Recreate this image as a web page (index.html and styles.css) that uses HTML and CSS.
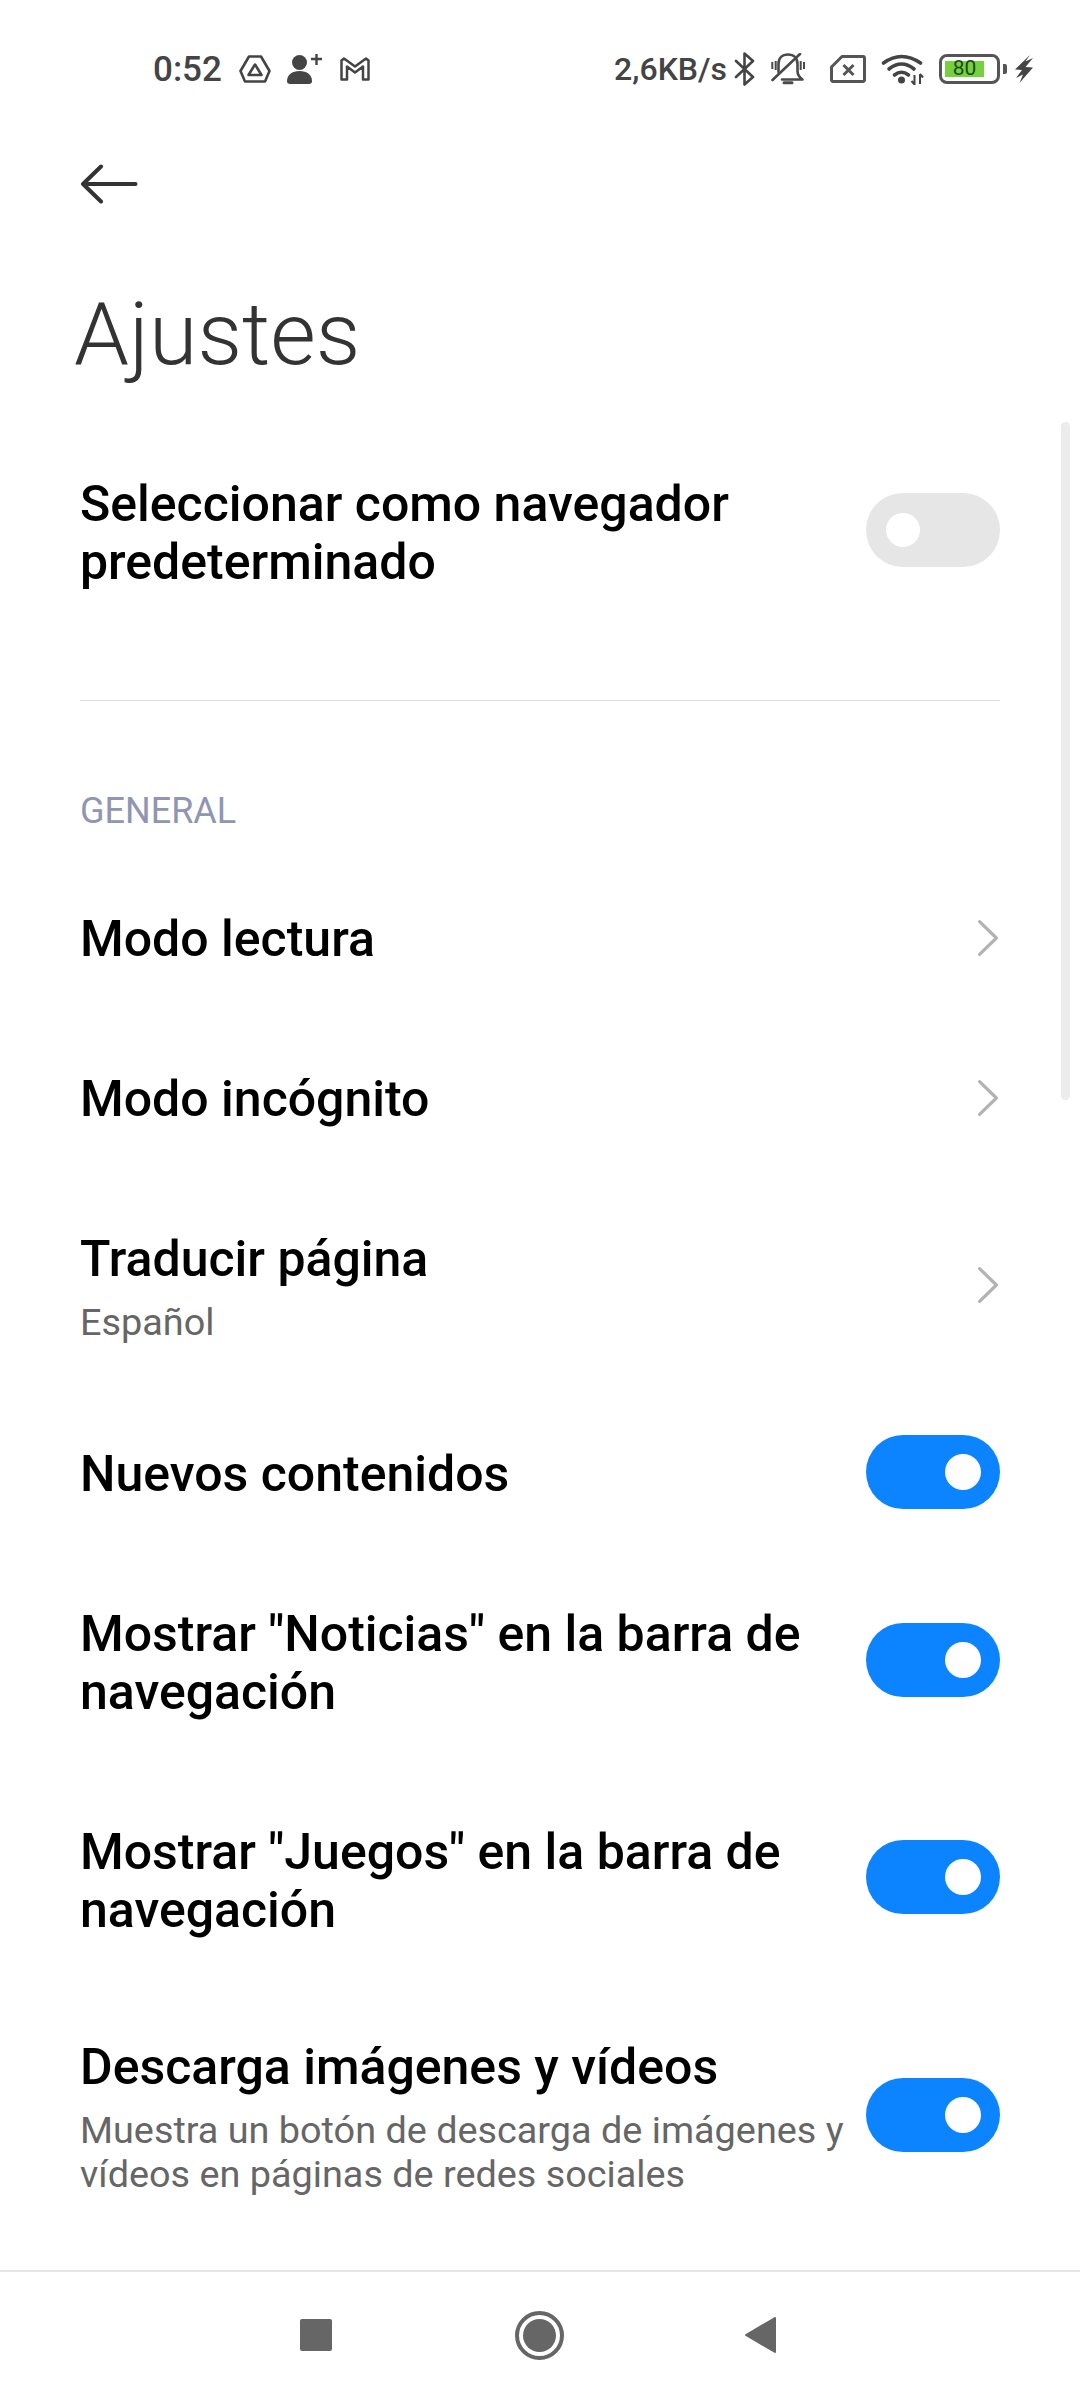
FILE: index.html
```html
<!DOCTYPE html>
<html lang="es">
<head>
<meta charset="utf-8">
<title>Ajustes</title>
<link rel="stylesheet" href="styles.css">
</head>
<body>
<div class="screen">
  <header class="status">
    <div class="status-left">
      <span class="time">0:52</span>
      <svg class="ic-drive" width="32" height="28" viewBox="0 0 32 28" fill="none" stroke="#444" stroke-width="2.6" stroke-linejoin="round"><path d="M10 1.500h12L30.500 16 26 26.500H6L1.500 16z"/><path d="M16 9.500l6.500 10.500h-13z"/></svg>
      <svg class="ic-person" width="36" height="30" viewBox="0 0 36 30" fill="#444"><circle cx="12.500" cy="8.500" r="7.500"/><path d="M0 27c0-6 5-10 12.500-10S25 21 25 27c0 2-1 3-3 3H3c-2 0-3-1-3-3z"/><path d="M24 5h11M29.500 0v11" stroke="#444" stroke-width="2.400" fill="none"/></svg>
      <svg class="ic-gmail" width="30" height="24" viewBox="0 0 30 24" fill="none" stroke="#444" stroke-width="2.500" stroke-linejoin="round"><path d="M1.500 22.500V3.500L4 1.500 15 9.500 26 1.500l2.500 2V22.500H23V9.500L15 15.500 7 9.500v13z"/></svg>
    </div>
    <div class="status-right">
      <span class="speed">2,6KB/s</span>
      <svg class="ic-bt" width="21" height="34" viewBox="0 0 21 34" fill="none" stroke="#444" stroke-width="2.600" stroke-linejoin="round" stroke-linecap="round"><path d="M2 9l17 16-8.500 7.500v-31L19 9 2 25"/></svg>
      <svg class="ic-bell" width="34" height="32" viewBox="0 0 34 32" fill="none" stroke="#4a4a4a" stroke-width="2.600" stroke-linecap="round" stroke-linejoin="round"><path d="M7.500 19V11C7.500 5 11.500 1.500 17 1.500S26.500 5 26.500 11v7c0 4 2 6.500 5 8.500H11"/><path d="M1.500 27L29 1"/><path d="M13 29.800h8" stroke-width="3"/><path d="M1.300 9v7M4.700 8v9M29.700 8v9M33 9v7" stroke-width="2" stroke-linecap="butt"/></svg>
      <svg class="ic-sim" width="36" height="28" viewBox="0 0 36 28" fill="none" stroke="#555" stroke-width="3" stroke-linejoin="round"><path d="M12 1.500h21a1.500 1.500 0 0 1 1.500 1.500v22a1.500 1.500 0 0 1-1.500 1.500H3A1.500 1.500 0 0 1 1.500 25V12z"/><path d="M13.500 10l10 10M23.500 10l-10 10"/></svg>
      <svg class="ic-wifi" width="43" height="31" viewBox="0 0 43 31" fill="none" stroke="#444" stroke-width="3.600" stroke-linecap="round"><path d="M2.500 9Q20.500 -4 39.500 9"/><path d="M8 15Q20.500 5 33 15"/><path d="M13.500 21Q20.500 15.500 27.500 21"/><circle cx="20.500" cy="26" r="3.500" fill="#444" stroke="none"/><path d="M33.500 21v10M39 20v10M30.500 27l3 3.500M42 23.500l-3-3.500" stroke-width="2" stroke-linecap="butt"/></svg>
      <div class="battery"><div class="battery-body"><span class="battery-fill">80</span></div><span class="battery-tip"></span></div>
      <svg class="ic-bolt" width="18" height="28" viewBox="0 0 18 28" fill="#444"><path d="M15 0L0 14.500l7 .5L1 23l7-3.500L4.500 28 18 12.500l-7.500-.5L18 3l-7.500 3.500z"/></svg>
    </div>
  </header>

  <main class="content">
    <svg class="back" width="58" height="40" viewBox="0 0 58 40" fill="none" stroke="#333" stroke-width="4" stroke-linecap="round" stroke-linejoin="round"><path d="M55.500 20H3M21 2.500L3 20l18 17.500"/></svg>
    <h1 class="title">Ajustes</h1>

    <section class="row row-first">
      <div class="row-text"><div class="label">Seleccionar como navegador predeterminado</div></div>
      <span class="switch"><span class="knob"></span></span>
    </section>
    <hr class="rule">
    <div class="group">GENERAL</div>

    <section class="row row-link r-reader">
      <div class="row-text"><div class="label">Modo lectura</div></div>
      <svg class="chev" width="22" height="38" viewBox="0 0 22 38" fill="none" stroke="#b3b3b3" stroke-width="3.200" stroke-linecap="round" stroke-linejoin="round"><path d="M1.600 2.600L18.400 19 1.600 35.400"/></svg>
    </section>
    <section class="row row-link r-incog">
      <div class="row-text"><div class="label">Modo incógnito</div></div>
      <svg class="chev" width="22" height="38" viewBox="0 0 22 38" fill="none" stroke="#b3b3b3" stroke-width="3.200" stroke-linecap="round" stroke-linejoin="round"><path d="M1.600 2.600L18.400 19 1.600 35.400"/></svg>
    </section>
    <section class="row r-trans">
      <div class="row-text"><div class="label">Traducir página</div><div class="sub">Español</div></div>
      <svg class="chev" width="22" height="38" viewBox="0 0 22 38" fill="none" stroke="#b3b3b3" stroke-width="3.200" stroke-linecap="round" stroke-linejoin="round"><path d="M1.600 2.600L18.400 19 1.600 35.400"/></svg>
    </section>
    <section class="row r-news">
      <div class="row-text"><div class="label">Nuevos contenidos</div></div>
      <span class="switch on"><span class="knob"></span></span>
    </section>
    <section class="row r-two">
      <div class="row-text"><div class="label">Mostrar "Noticias" en la barra de navegación</div></div>
      <span class="switch on"><span class="knob"></span></span>
    </section>
    <section class="row r-two r-games">
      <div class="row-text"><div class="label">Mostrar "Juegos" en la barra de navegación</div></div>
      <span class="switch on"><span class="knob"></span></span>
    </section>
    <section class="row r-last">
      <div class="row-text"><div class="label">Descarga imágenes y vídeos</div><div class="sub sub-long">Muestra un botón de descarga de imágenes y vídeos en páginas de redes sociales</div></div>
      <span class="switch on"><span class="knob"></span></span>
    </section>
    <div class="scrollbar"></div>
  </main>

  <nav class="navbar">
    <span class="nav-square"></span>
    <span class="nav-home"><span class="nav-dot"></span></span>
    <svg class="nav-back" width="31" height="36" viewBox="0 0 31 36" fill="#666" stroke="#666" stroke-width="2" stroke-linejoin="round"><path d="M30 1v34L1 18z"/></svg>
  </nav>
</div>
</body>
</html>
```
FILE: styles.css
```css
* { box-sizing: border-box; }
html, body { margin: 0; padding: 0; background: #fff; }
body { font-family: Roboto, "Noto Sans", sans-serif; }
.screen { width: 1080px; height: 2400px; display: flex; flex-direction: column; overflow: hidden; background: #fff; }

.status { height: 90px; flex: none; display: flex; justify-content: space-between; align-items: center; padding: 0 47px 0 153px; margin-top: 24px; color: #444; }
.status-left, .status-right { display: flex; align-items: center; }
.time { font-size: 35px; font-weight: 500; width: 68px; letter-spacing: 0; }
.ic-drive { margin-left: 18px; }
.ic-person { margin-left: 16px; }
.ic-gmail { margin-left: 17px; }
.speed { font-size: 32px; font-weight: 500; }
.ic-bt { margin-left: 7px; }
.ic-bell { margin-left: 16px; }
.ic-sim { margin-left: 25px; }
.ic-wifi { margin-left: 15px; }
.battery { margin-left: 15px; display: flex; align-items: center; }
.battery-body { width: 61px; height: 30px; border: 3.500px solid #555; border-radius: 8px; padding: 4px 3px; }
.battery-fill { display: block; height: 100%; width: 39px; background: #76d13f; color: #1c4a10; font-size: 21px; line-height: 15px; text-align: center; }
.battery-tip { width: 4px; height: 10px; margin-left: 3px; background: #555; border-radius: 0 2px 2px 0; }
.ic-bolt { margin-left: 8px; }

.content { flex: 1; position: relative; min-height: 0; overflow: hidden; }
.back { display: block; margin: 50px 0 0 80px; }
.title { margin: 80px 0 0 74px; font-size: 88px; line-height: 100px; font-weight: 300; color: #333; }

.row { display: flex; align-items: center; justify-content: space-between; padding: 0 80px; }
.row-text { flex: 1; min-width: 0; }
.label { font-size: 50px; line-height: 58px; font-weight: 500; color: #000; width: 740px; }
.sub { font-size: 37.800px; line-height: 44px; color: #666; margin-top: 12px; }
.sub-long { width: 786px; margin-top: 12px; }

.row-first { margin-top: 91px; height: 116px; }
.rule { margin: 109px 80px 0; border: 0; border-top: 1px solid #e0e0e0; height: 1px; }
.group { margin: 90px 0 0 80px; font-size: 36px; line-height: 40px; color: #8f95b2; }

.row-link { height: 160px; }
.r-reader { margin-top: 28px; }
.r-trans { height: 215px; }
.r-news { height: 160px; }
.r-two { height: 218px; }
.r-last { height: 254px; }

.chev { flex: none; margin-bottom: 2px; }
.r-trans .chev { margin-bottom: 3px; }
.switch { flex: none; width: 134px; height: 74px; border-radius: 37px; background: #e6e6e6; display: flex; align-items: center; padding: 0 20px; }
.knob { width: 34px; height: 34px; border-radius: 50%; background: #fff; }
.switch.on { background: #0d84ff; justify-content: flex-end; padding: 0 19px; }
.switch.on .knob { width: 36px; height: 36px; }
.row-first .switch { margin-bottom: 7px; }
.r-news .switch { margin-bottom: 4px; }
.r-two .switch { margin-bottom: 6px; }
.r-two.r-games .switch { margin-bottom: 9px; }
.r-last .switch { margin-bottom: 4px; }

.scrollbar { position: absolute; left: 1061px; top: 308px; width: 9px; height: 678px; border-radius: 5px; background: #ececec; }

.navbar { flex: none; height: 130px; border-top: 2px solid #e6e6e6; display: flex; align-items: center; padding: 0 0 2px 300px; }
.nav-square { width: 32px; height: 32px; border-radius: 2px; background: #666; }
.nav-home { margin-left: 183px; width: 49px; height: 49px; border: 4px solid #666; border-radius: 50%; display: flex; align-items: center; justify-content: center; }
.nav-dot { width: 33px; height: 33px; border-radius: 50%; background: #666; }
.nav-back { margin-left: 181px; }
```
